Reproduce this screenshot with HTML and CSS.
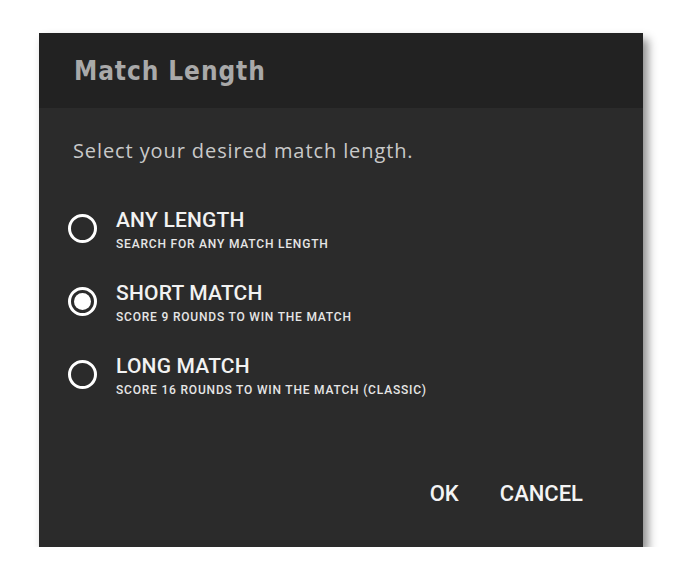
FILE: index.html
```html
<!DOCTYPE html>
<html lang="en">
<head>
    <meta charset="UTF-8">
    <meta name="viewport" content="width=device-width, initial-scale=1.0">
    <title>Match Length</title>
    <link rel="stylesheet" href="styles.css">
</head>
<body>
    <div class="dialog">
        <div class="dialog-header">
            <h1>Match Length</h1>
        </div>
        <div class="dialog-body">
            <p class="intro">Select your desired match length.</p>
            <div class="options">
                <label class="option">
                    <span class="radio"></span>
                    <span class="option-text">
                        <span class="option-title">ANY LENGTH</span>
                        <span class="option-desc">SEARCH FOR ANY MATCH LENGTH</span>
                    </span>
                </label>
                <label class="option">
                    <span class="radio checked"></span>
                    <span class="option-text">
                        <span class="option-title">SHORT MATCH</span>
                        <span class="option-desc">SCORE 9 ROUNDS TO WIN THE MATCH</span>
                    </span>
                </label>
                <label class="option">
                    <span class="radio"></span>
                    <span class="option-text">
                        <span class="option-title">LONG MATCH</span>
                        <span class="option-desc">SCORE 16 ROUNDS TO WIN THE MATCH (CLASSIC)</span>
                    </span>
                </label>
            </div>
        </div>
        <div class="dialog-footer">
            <button>OK</button>
            <button>CANCEL</button>
        </div>
    </div>
</body>
</html>
```

FILE: styles.css
```css
body {
    margin: 0;
    padding: 33px 0 0 39px;
    background-color: #ffffff;
    font-family: Roboto, sans-serif;
}

.dialog {
    width: 604px;
    height: 514px;
    display: flex;
    flex-direction: column;
    background-color: #2b2b2b;
    box-shadow: 5px 6px 9px rgba(0, 0, 0, 0.45);
}

.dialog-header {
    height: 75px;
    display: flex;
    align-items: center;
    padding-left: 35px;
    background-color: #222222;
}

.dialog-header h1 {
    margin: 0;
    font-family: "DejaVu Sans Condensed", "DejaVu Sans", sans-serif;
    font-size: 26px;
    font-weight: bold;
    color: #a9a9a9;
    letter-spacing: 0.9px;
}

.dialog-body {
    flex-grow: 1;
    padding-left: 29px;
}

.intro {
    margin: 30px 0 0 5px;
    font-family: "Open Sans", sans-serif;
    font-size: 20px;
    line-height: 26px;
    color: #c9c9c9;
    letter-spacing: 0.9px;
}

.options {
    display: flex;
    flex-direction: column;
    gap: 29px;
    margin-top: 44px;
}

.option {
    display: flex;
    align-items: center;
    gap: 19px;
}

.radio {
    width: 23px;
    height: 23px;
    border: 3px solid #ffffff;
    border-radius: 50%;
    display: flex;
    align-items: center;
    justify-content: center;
    margin-top: -4px;
}

.radio.checked::after {
    content: "";
    width: 17px;
    height: 17px;
    border-radius: 50%;
    background-color: #ffffff;
}

.option-text {
    display: flex;
    flex-direction: column;
    gap: 4px;
}

.option-title {
    font-size: 21px;
    font-weight: 500;
    line-height: 24px;
    color: #f2f2f2;
    letter-spacing: 0.2px;
}

.option-desc {
    font-size: 12px;
    font-weight: 500;
    line-height: 16px;
    color: #e6e6e6;
    letter-spacing: 0.8px;
}

.dialog-footer {
    display: flex;
    justify-content: flex-end;
    gap: 41px;
    padding: 0 60px 40px 0;
}

button {
    background: none;
    border: none;
    padding: 0;
    font-family: Roboto, sans-serif;
    font-size: 22px;
    font-weight: 500;
    line-height: 26px;
    color: #f4f4f4;
    letter-spacing: 0;
    cursor: pointer;
}
```
